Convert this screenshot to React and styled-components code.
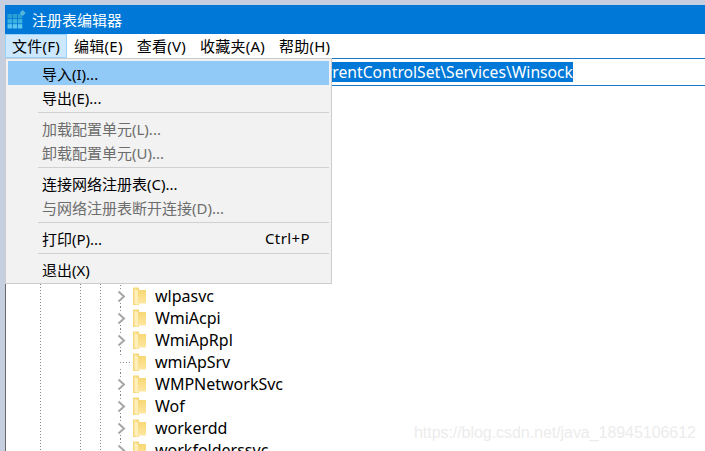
import React from "react";
import styled, { createGlobalStyle } from "styled-components";

const uiFont = `"Noto Sans", "Noto Sans CJK SC", sans-serif`;

const GlobalStyle = createGlobalStyle`
    html, body {
        margin: 0;
        padding: 0;
        width: 705px;
        height: 451px;
        overflow: hidden;
        background: #c6cfe0;
    }
`;

const menus = ["编辑(E)", "查看(V)", "收藏夹(A)", "帮助(H)"];

const services = [
    { name: "wlpasvc", branch: true },
    { name: "WmiAcpi", branch: true },
    { name: "WmiApRpl", branch: true },
    { name: "wmiApSrv", branch: false },
    { name: "WMPNetworkSvc", branch: true },
    { name: "Wof", branch: true },
    { name: "workerdd", branch: true },
    { name: "workfolderssvc", branch: true },
];

const AppIcon = () => (
    <svg width="20" height="20" viewBox="0 0 20 20">
        {[0, 1, 2].map((r) =>
            [0, 1, 2].map((c) => (
                <rect key={`${r}${c}`} x={0.5 + c * 5.2} y={4 + r * 5.1} width="4.4" height="4.3" fill={r === 0 ? "#2a9fd2" : r === 1 ? "#3db0e2" : "#5cc6ef"} />
            ))
        )}
        <path d="M15.7 0l3 3-3 3-3-3z" fill="#56b4d8" />
    </svg>
);

const Chevron = () => (
    <svg width="9" height="13" viewBox="0 0 9 13">
        <path d="M1.5 1.5L7 6.5l-5.5 5" fill="none" stroke="#a6a6a6" strokeWidth="2" />
    </svg>
);

const FolderIcon = () => (
    <svg width="13" height="19" viewBox="0 0 13 19">
        <defs>
            <linearGradient id="folderBack" x1="0" y1="0" x2="0" y2="1">
                <stop offset="0" stopColor="#f8d774" />
                <stop offset="1" stopColor="#fde7a0" />
            </linearGradient>
        </defs>
        <path d="M0 0.5h6v17.5H0z" fill="#f6d878" />
        <path d="M5 3h8v13.5H5z" fill="url(#folderBack)" />
        <path d="M1.5 1.5L5 3.5V18L1.5 16.5z" fill="#fdeebc" />
    </svg>
);

const App = () => (
    <Window>
        <GlobalStyle />
        <TitleBar>
            <AppIcon />
            <TitleText>注册表编辑器</TitleText>
        </TitleBar>

        <MenuBar>
            <MenuButton $open>文件(F)</MenuButton>
            {menus.map((m) => (
                <MenuButton key={m}>{m}</MenuButton>
            ))}
            <FileMenu>
                <MenuItem $active>导入(I)...</MenuItem>
                <MenuItem>导出(E)...</MenuItem>
                <MenuSeparator />
                <MenuItem $disabled>加载配置单元(L)...</MenuItem>
                <MenuItem $disabled>卸载配置单元(U)...</MenuItem>
                <MenuSeparator />
                <MenuItem>连接网络注册表(C)...</MenuItem>
                <MenuItem $disabled>与网络注册表断开连接(D)...</MenuItem>
                <MenuSeparator />
                <MenuItem>
                    打印(P)...
                    <Shortcut>Ctrl+P</Shortcut>
                </MenuItem>
                <MenuSeparator />
                <MenuItem>退出(X)</MenuItem>
            </FileMenu>
        </MenuBar>

        <AddressBar>
            <AddressText>计算机\HKEY_LOCAL_MACHINE\SYSTEM\CurrentControlSet\Services\Winsock</AddressText>
        </AddressBar>

        <Tree>
            {services.map((s) => (
                <TreeRow key={s.name}>
                    <Expander>
                        {s.branch ? <Chevron /> : <LeafLine />}
                    </Expander>
                    <FolderIcon />
                    <RowName>{s.name}</RowName>
                </TreeRow>
            ))}
            <Watermark>https://blog.csdn.net/java_18945106612</Watermark>
        </Tree>
    </Window>
);

const Window = styled.div`
    width: 700px;
    height: 446px;
    margin: 5px 0 0 5px;
    display: flex;
    flex-direction: column;
    overflow: hidden;
    font-family: ${uiFont};
    color: #000;
`;

const TitleBar = styled.div`
    flex: 0 0 29px;
    display: flex;
    align-items: center;
    gap: 5px;
    padding-left: 2px;
    background: #0078d7;
`;

const TitleText = styled.span`
    font-size: 15px;
    color: #fff;
`;

const MenuBar = styled.div`
    flex: 0 0 24px;
    position: relative;
    display: flex;
    background: #fff;
`;

const MenuButton = styled.div`
    box-sizing: border-box;
    height: 24px;
    padding: 0 6px;
    display: flex;
    align-items: center;
    font-size: 15px;
    line-height: 22px;
    letter-spacing: 0.25px;
    border: 1px solid ${(p) => (p.$open ? "#99d1ff" : "transparent")};
    background: ${(p) => (p.$open ? "#cce8ff" : "transparent")};
`;

const FileMenu = styled.div`
    position: absolute;
    z-index: 2;
    left: 0;
    top: 24px;
    box-sizing: border-box;
    width: 327px;
    height: 226px;
    padding: 2px;
    background: #f2f2f2;
    border: 1px solid #cccccc;
`;

const MenuItem = styled.div`
    height: 24px;
    padding: 0 19px 0 34px;
    box-sizing: border-box;
    display: flex;
    align-items: center;
    justify-content: space-between;
    font-size: 15px;
    color: ${(p) => (p.$disabled ? "#6d6d6d" : "#000")};
    background: ${(p) => (p.$active ? "#91c9f7" : "transparent")};
`;

const Shortcut = styled.span`
    letter-spacing: 0.4px;
`;

const MenuSeparator = styled.div`
    height: 1px;
    margin: 3px 0 3px 30px;
    background: #d0d0d0;
`;

const AddressBar = styled.div`
    flex: 0 0 28px;
    box-sizing: border-box;
    width: 100%;
    padding-right: 132px;
    display: flex;
    align-items: center;
    justify-content: flex-end;
    background: #fff;
    border-top: 1px solid #1979c9;
    border-bottom: 1px solid #1979c9;
`;

const AddressText = styled.span`
    flex: none;
    height: 20px;
    line-height: 20px;
    font-size: 15.7px;
    white-space: nowrap;
    color: #fff;
    background: #0078d7;
`;

const dotted = "repeating-linear-gradient(to bottom, #8a8a8a 0 1px, transparent 1px 3px)";

const Tree = styled.div`
    flex: 1;
    min-height: 0;
    position: relative;
    overflow: hidden;
    padding-top: 199px;
    background-color: #fff;
    background-image: ${dotted}, ${dotted}, ${dotted};
    background-repeat: no-repeat;
    background-size: 1px 100%;
    background-position: 34px 0, 74px 0, 94px 0;
    border-left: 1px solid #696969;
`;

const TreeRow = styled.div`
    height: 22px;
    display: flex;
    align-items: center;
    padding-left: 110px;
    background-image: ${dotted};
    background-repeat: no-repeat;
    background-size: 1px 100%;
    background-position: 114px 0;
`;

const Expander = styled.div`
    flex: 0 0 17px;
    height: 14px;
    display: flex;
    align-items: center;
    justify-content: flex-start;
    padding-left: 1px;
    box-sizing: border-box;
    background: #fff;
`;

const LeafLine = styled.span`
    display: block;
    width: 12px;
    height: 1px;
    margin-left: 3px;
    background: repeating-linear-gradient(to right, #8a8a8a 0 1px, transparent 1px 3px);
`;

const RowName = styled.span`
    margin-left: 9px;
    font-size: 16px;
    line-height: 22px;
    color: #000;
`;

const Watermark = styled.span`
    position: absolute;
    left: 408px;
    top: 338px;
    font-family: "Liberation Sans", sans-serif;
    font-size: 16px;
    letter-spacing: -0.05px;
    white-space: nowrap;
    color: #ececec;
`;

export default App;
